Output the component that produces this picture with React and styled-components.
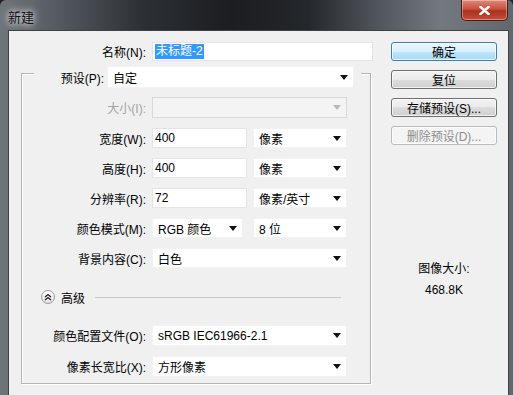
import React from 'react'
import styled, { createGlobalStyle } from 'styled-components'

const Global = createGlobalStyle`
  html, body { margin: 0; padding: 0; background: #1f2328; }
  body { font-family: "Liberation Sans", "Noto Sans CJK SC", sans-serif; font-size: 12px; color: #000; }
`

const Window = styled.div`
  width: 513px;
  height: 395px;
  display: flex;
  flex-direction: column;
  overflow: hidden;
  border-radius: 6px 6px 0 0;
  background: linear-gradient(to right, #70757b 0%, #585d63 10%, #2c3035 28%, #1b1d20 45%, #24272b 60%, #52575d 74%, #74797f 86%, #62676d 100%);
`

const TitleBar = styled.div`
  height: 30px;
  flex: none;
  display: flex;
  align-items: flex-start;
  justify-content: space-between;
  padding: 0 5px 0 8px;
`

const Title = styled.div`
  margin-top: 7px;
  font-size: 13px;
  color: #111;
  text-shadow: 0 0 6px rgba(255,255,255,0.9), 0 0 10px rgba(255,255,255,0.7);
`

const CloseBtn = styled.div`
  width: 45px;
  height: 20px;
  display: flex;
  align-items: center;
  justify-content: center;
  border: 1px solid #4a1a14;
  border-top: none;
  border-radius: 0 0 5px 5px;
  background: linear-gradient(#e08a7c 0%, #c9503f 45%, #a8301f 55%, #c6503a 100%);
  box-shadow: inset 0 0 0 1px rgba(255,255,255,0.35);
`

const Client = styled.div`
  flex: 1;
  margin: 0 4px 0 8px;
  background: #f0f0f0;
  border: 1px solid #3c4146;
  border-bottom: none;
  display: flex;
  padding-left: 12px;
`

const LeftCol = styled.div`
  width: 352px;
  display: flex;
  flex-direction: column;
`

const RightCol = styled.div`
  margin-left: 18px;
  width: 106px;
  display: flex;
  flex-direction: column;
  align-items: center;
  padding-top: 11px;
  gap: 9px;
`

const NameRow = styled.div`
  display: flex;
  align-items: center;
  height: 19px;
  margin-top: 11px;
`

const Label = styled.div`
  width: ${p => p.$w || 124}px;
  flex: none;
  text-align: right;
  white-space: nowrap;
  color: ${p => (p.$disabled ? '#a3a3a3' : '#000')};
`

const TextBox = styled.div`
  width: ${p => p.$w}px;
  height: ${p => p.$h || 20}px;
  margin-left: 6px;
  box-sizing: border-box;
  background: #fff;
  border: 1px solid #e3e5e9;
  display: flex;
  align-items: center;
  padding-left: 2px;
`

const Selected = styled.span`
  background: #3399ff;
  color: #fff;
  padding: 0 1px;
  line-height: 15px;
`

const Group = styled.div`
  margin-top: 12px;
  width: 350px;
  height: 311px;
  box-sizing: border-box;
  border: 1px solid #b5b5b5;
  box-shadow: 1px 1px 0 #fff, inset 1px 1px 0 #fff;
  display: flex;
  flex-direction: column;
`

const Legend = styled.div`
  margin: -8px 9px 0 12px;
  height: 22px;
  background: #f0f0f0;
  display: flex;
  align-items: center;
`

const Rows = styled.div`
  display: flex;
  flex-direction: column;
  gap: 10px;
  margin-top: ${p => p.$top}px;
`

const Row = styled.div`
  display: flex;
  align-items: center;
  height: ${p => p.$h || 20}px;
`

const Combo = styled.div`
  width: ${p => p.$w}px;
  height: 100%;
  margin-left: ${p => (p.$ml === undefined ? 6 : p.$ml)}px;
  box-sizing: border-box;
  background: ${p => (p.$disabled ? '#f4f4f4' : '#fff')};
  border: 1px solid ${p => (p.$disabled ? '#d9d9d9' : '#f2f2f2')};
  display: flex;
  align-items: center;
  justify-content: space-between;
  padding: 0 5px 0 5px;
  white-space: nowrap;
`

const Arrow = styled.span`
  width: 0;
  height: 0;
  border-left: 4px solid transparent;
  border-right: 4px solid transparent;
  border-top: 5px solid ${p => (p.$disabled ? '#b8b8b8' : '#111')};
`

const Advanced = styled.div`
  display: flex;
  align-items: center;
  height: 16px;
  margin: 21px 0 0 19px;
  gap: 6px;
`

const Toggle = styled.div`
  width: 14px;
  height: 14px;
  box-sizing: border-box;
  border-radius: 50%;
  border: 1px solid #9a9a9a;
  background: linear-gradient(#ffffff, #e2e2e2);
  display: flex;
  align-items: center;
  justify-content: center;
`

const Rule = styled.div`
  flex: none;
  width: 246px;
  height: 1px;
  background: #c8c8c8;
  margin-left: 4px;
`

const Button = styled.div`
  width: 106px;
  height: 19px;
  box-sizing: border-box;
  border-radius: 3px;
  border: 1px solid ${p => (p.$default ? '#3c7fb1' : p.$disabled ? '#b8bcbf' : '#707070')};
  background: ${p => (p.$disabled ? '#f4f4f4' : p.$default ? 'linear-gradient(#eaf6fd 0%, #d9f0fc 50%, #bee6fd 50%, #a7d9f5 100%)' : 'linear-gradient(#f2f2f2 0%, #ebebeb 50%, #dddddd 50%, #cfcfcf 100%)')};
  box-shadow: inset 0 0 0 1px rgba(255,255,255,0.7);
  color: ${p => (p.$disabled ? '#8d8d8d' : '#000')};
  display: flex;
  align-items: center;
  justify-content: center;
  white-space: nowrap;
`

const Info = styled.div`
  margin-top: ${p => p.$top || 0}px;
  text-align: center;
`

const units = [
  { label: '宽度(W):', value: '400', unit: '像素' },
  { label: '高度(H):', value: '400', unit: '像素' },
  { label: '分辨率(R):', value: '72', unit: '像素/英寸' },
]

const App = () => {
  return (
    <>
      <Global />
      <Window>
        <TitleBar>
          <Title>新建</Title>
          <CloseBtn>
            <svg width="11" height="9" viewBox="0 0 11 9">
              <path d="M1.5 1 L9.5 8 M9.5 1 L1.5 8" stroke="#fff" strokeWidth="2.4" strokeLinecap="square" />
            </svg>
          </CloseBtn>
        </TitleBar>
        <Client>
          <LeftCol>
            <NameRow>
              <Label $w={125}>名称(N):</Label>
              <TextBox $w={221} $h={19}><Selected>未标题-2</Selected></TextBox>
            </NameRow>
            <Group>
              <Legend>
                <Label $w={70}>预设(P):</Label>
                <Combo $w={247} $ml={3}>自定<Arrow /></Combo>
              </Legend>
              <Rows $top={9}>
                <Row $h={21}>
                  <Label $disabled>大小(I):</Label>
                  <Combo $w={195} $disabled><span /><Arrow $disabled /></Combo>
                </Row>
                {units.map(u => (
                  <Row key={u.label}>
                    <Label>{u.label}</Label>
                    <TextBox $w={95}>{u.value}</TextBox>
                    <Combo $w={94}>{u.unit}<Arrow /></Combo>
                  </Row>
                ))}
                <Row>
                  <Label>颜色模式(M):</Label>
                  <Combo $w={91}>RGB 颜色<Arrow /></Combo>
                  <Combo $w={94} $ml={10}>8 位<Arrow /></Combo>
                </Row>
                <Row>
                  <Label>背景内容(C):</Label>
                  <Combo $w={195}>白色<Arrow /></Combo>
                </Row>
              </Rows>
              <Advanced>
                <Toggle>
                  <svg width="8" height="8" viewBox="0 0 8 8">
                    <path d="M1 4 L4 1.5 L7 4 M1 7 L4 4.5 L7 7" fill="none" stroke="#222" strokeWidth="1.3" />
                  </svg>
                </Toggle>
                高级
                <Rule />
              </Advanced>
              <Rows $top={20}>
                <Row $h={21}>
                  <Label>颜色配置文件(O):</Label>
                  <Combo $w={195}>sRGB IEC61966-2.1<Arrow /></Combo>
                </Row>
                <Row $h={21}>
                  <Label>像素长宽比(X):</Label>
                  <Combo $w={195}>方形像素<Arrow /></Combo>
                </Row>
              </Rows>
            </Group>
          </LeftCol>
          <RightCol>
            <Button $default>确定</Button>
            <Button>复位</Button>
            <Button>存储预设(S)...</Button>
            <Button $disabled>删除预设(D)...</Button>
            <Info $top={105}>图像大小:</Info>
            <Info $top={-2}>468.8K</Info>
          </RightCol>
        </Client>
      </Window>
    </>
  )
}

export default App
